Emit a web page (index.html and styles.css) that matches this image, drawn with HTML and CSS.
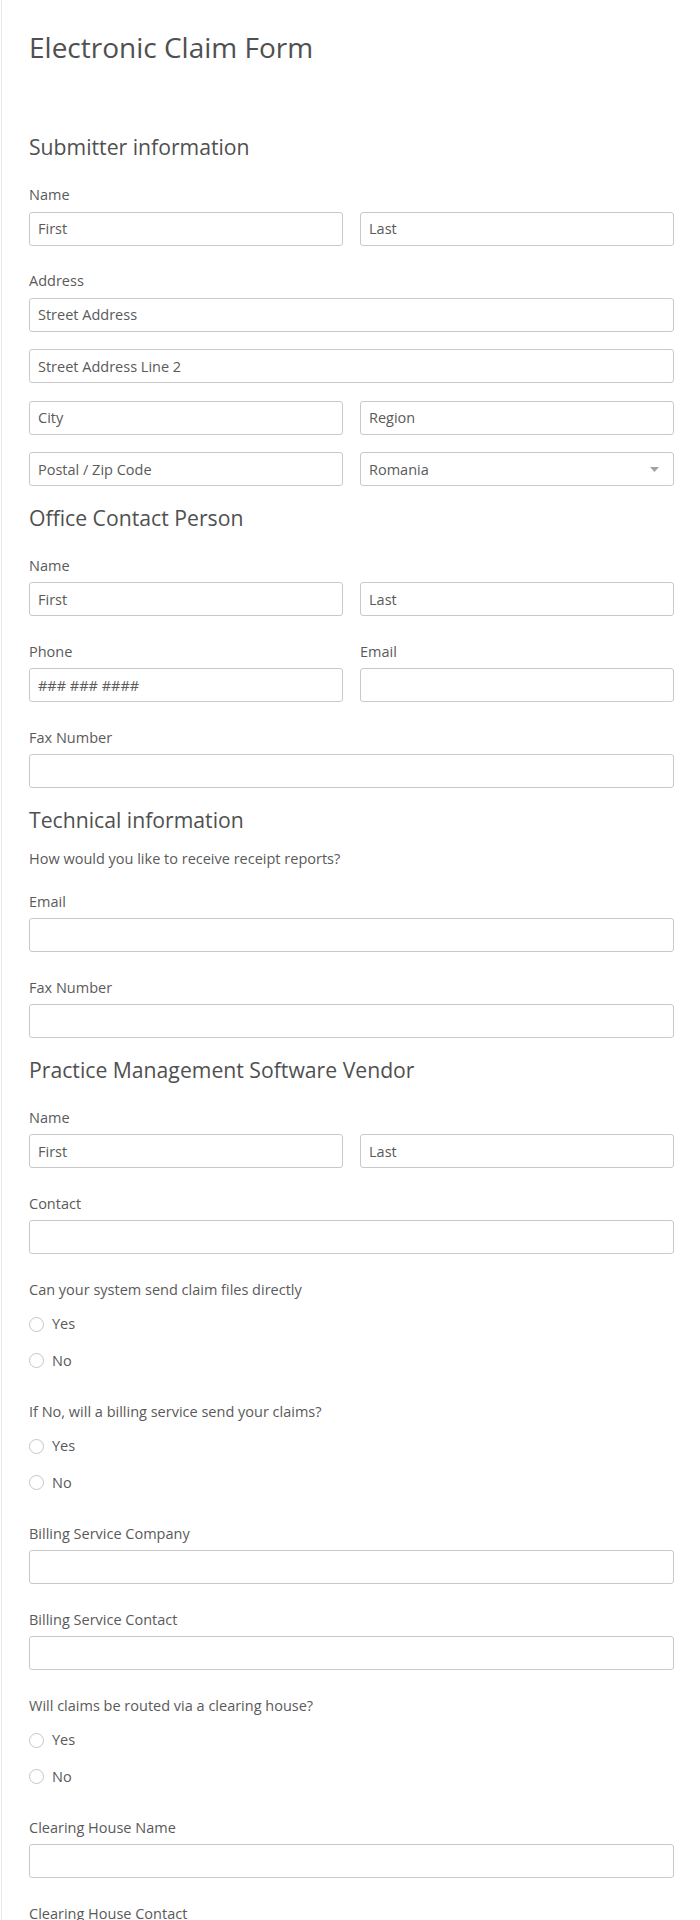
FILE: index.html
```html
<!DOCTYPE html>
<html lang="en">
<head>
    <meta charset="UTF-8">
    <meta name="viewport" content="width=device-width, initial-scale=1.0">
    <title>Electronic Claim Form</title>
    <link rel="stylesheet" href="styles.css">
</head>
<body>
    <form class="claim-form" id="claimForm">
        <h1 class="form-title">Electronic Claim Form</h1>

        <!-- Submitter -->
        <h2 class="section-title top">Submitter information</h2>
        <div class="form-group">
            <label>Name</label>
            <div class="row-2">
                <input type="text" name="sub_first" placeholder="First">
                <input type="text" name="sub_last" placeholder="Last">
            </div>
        </div>
        <div class="form-group">
            <label>Address</label>
            <div class="address">
                <input type="text" name="street" placeholder="Street Address">
                <input type="text" name="street2" placeholder="Street Address Line 2">
                <div class="row-2">
                    <input type="text" name="city" placeholder="City">
                    <input type="text" name="region" placeholder="Region">
                </div>
                <div class="row-2">
                    <input type="text" name="zip" placeholder="Postal / Zip Code">
                    <div class="select-wrap">
                        <select name="country">
                            <option>Romania</option>
                        </select>
                        <svg class="select-arrow" width="9" height="5" viewBox="0 0 9 5"><path d="M0 0h9L4.5 5z" fill="#a3a3a3"/></svg>
                    </div>
                </div>
            </div>
        </div>

        <!-- Office contact -->
        <h2 class="section-title">Office Contact Person</h2>
        <div class="form-group">
            <label>Name</label>
            <div class="row-2">
                <input type="text" name="off_first" placeholder="First">
                <input type="text" name="off_last" placeholder="Last">
            </div>
        </div>
        <div class="form-group row-2">
            <div>
                <label>Phone</label>
                <input type="tel" name="phone" placeholder="### ### ####">
            </div>
            <div>
                <label>Email</label>
                <input type="email" name="off_email">
            </div>
        </div>
        <div class="form-group">
            <label>Fax Number</label>
            <input type="text" name="off_fax">
        </div>

        <!-- Technical -->
        <h2 class="section-title">Technical information</h2>
        <p class="section-desc">How would you like to receive receipt reports?</p>
        <div class="form-group">
            <label>Email</label>
            <input type="email" name="tech_email">
        </div>
        <div class="form-group">
            <label>Fax Number</label>
            <input type="text" name="tech_fax">
        </div>

        <!-- Vendor -->
        <h2 class="section-title">Practice Management Software Vendor</h2>
        <div class="form-group">
            <label>Name</label>
            <div class="row-2">
                <input type="text" name="ven_first" placeholder="First">
                <input type="text" name="ven_last" placeholder="Last">
            </div>
        </div>
        <div class="form-group">
            <label>Contact</label>
            <input type="text" name="ven_contact">
        </div>
        <div class="form-group">
            <label>Can your system send claim files directly</label>
            <div class="radio-list">
                <label class="radio-option"><input type="radio" name="direct"> Yes</label>
                <label class="radio-option"><input type="radio" name="direct"> No</label>
            </div>
        </div>
        <div class="form-group">
            <label>If No, will a billing service send your claims?</label>
            <div class="radio-list">
                <label class="radio-option"><input type="radio" name="billing"> Yes</label>
                <label class="radio-option"><input type="radio" name="billing"> No</label>
            </div>
        </div>
        <div class="form-group">
            <label>Billing Service Company</label>
            <input type="text" name="bill_company">
        </div>
        <div class="form-group">
            <label>Billing Service Contact</label>
            <input type="text" name="bill_contact">
        </div>
        <div class="form-group">
            <label>Will claims be routed via a clearing house?</label>
            <div class="radio-list">
                <label class="radio-option"><input type="radio" name="clearing"> Yes</label>
                <label class="radio-option"><input type="radio" name="clearing"> No</label>
            </div>
        </div>
        <div class="form-group">
            <label>Clearing House Name</label>
            <input type="text" name="ch_name">
        </div>
        <div class="form-group">
            <label>Clearing House Contact</label>
            <input type="text" name="ch_contact">
        </div>
    </form>
</body>
</html>
```

FILE: styles.css
```css
body {
    margin: 0;
    background-color: #fff;
    font-family: "Open Sans", "Liberation Sans", sans-serif;
    color: #555;
}
.claim-form {
    margin-left: 1px;
    border-left: 1px solid #ebebeb;
    padding: 30px 26px 40px 27px;
}
.form-title {
    margin: 0;
    font-size: 28px;
    line-height: 34px;
    font-weight: 400;
    color: #505050;
}
.section-title {
    margin: 18.5px 0 0;
    font-size: 21.2px;
    line-height: 26px;
    font-weight: 400;
    color: #505050;
}
.section-title.top {
    margin-top: 70px;
}
.section-desc {
    margin: 16px 0 0;
    font-size: 14.5px;
    line-height: 20px;
    color: #5a5a5a;
}
.form-group {
    margin-top: 25.5px;
}
.section-title + .form-group {
    margin-top: 25px;
}
.section-desc + .form-group {
    margin-top: 23px;
}
.form-group label {
    display: block;
    margin-bottom: 6.5px;
    font-size: 14.5px;
    line-height: 20px;
    color: #5a5a5a;
}
.row-2 {
    display: grid;
    grid-template-columns: 1fr 1fr;
    gap: 17px;
}
.address > * + * {
    margin-top: 17.5px;
}
.form-group input[type="text"],
.form-group input[type="tel"],
.form-group input[type="email"],
.form-group select {
    display: block;
    width: 100%;
    height: 34px;
    box-sizing: border-box;
    padding: 0 8px;
    border: 1px solid #c9c9c9;
    border-radius: 3px;
    background-color: #fff;
    font-family: inherit;
    font-size: 14.5px;
    color: #5a5a5a;
    outline: none;
}
.form-group input::placeholder {
    color: #5a5a5a;
    opacity: 1;
}
.select-wrap {
    position: relative;
}
.form-group select {
    appearance: none;
    -webkit-appearance: none;
    padding-right: 30px;
}
.select-arrow {
    position: absolute;
    right: 15px;
    top: 15px;
    pointer-events: none;
}
.radio-list {
    padding: 8px 0 5.5px;
}
.form-group .radio-option {
    display: flex;
    align-items: center;
    gap: 8px;
    height: 20px;
    margin: 0;
}
.form-group .radio-option + .radio-option {
    margin-top: 16.5px;
}
.radio-option input {
    appearance: none;
    -webkit-appearance: none;
    width: 15px;
    height: 15px;
    margin: 0;
    border: 1px solid #c6c6c6;
    border-radius: 50%;
    background-color: #fff;
    flex-shrink: 0;
}
.radio-option input:checked {
    border: 5px solid #2e69ff;
}
```
